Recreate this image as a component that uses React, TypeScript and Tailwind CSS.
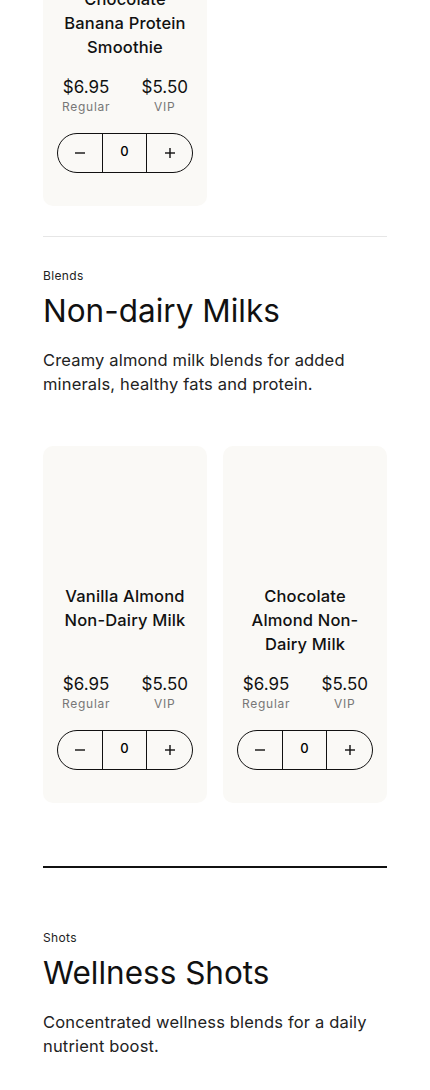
import React from "react";

interface Product {
  name: string;
  regular: string;
  vip: string;
}

const smoothies: Product[] = [
  { name: "Chocolate Banana Protein Smoothie", regular: "$6.95", vip: "$5.50" },
];

const milks: Product[] = [
  { name: "Vanilla Almond Non-Dairy Milk", regular: "$6.95", vip: "$5.50" },
  { name: "Chocolate Almond Non-Dairy Milk", regular: "$6.95", vip: "$5.50" },
];

const Stepper = () => (
  <div className="mt-[18px] flex h-10 w-full items-stretch rounded-full border border-[#111]">
    <button className="flex w-[44px] items-center justify-center">
      <svg width="12" height="12" viewBox="0 0 12 12">
        <line x1="1" y1="6" x2="11" y2="6" stroke="#111" strokeWidth="1.4" />
      </svg>
    </button>
    <div className="flex flex-1 items-center justify-center border-x border-[#111] pb-[3px] text-[13px] font-medium">
      0
    </div>
    <button className="flex w-[45px] items-center justify-center">
      <svg width="12" height="12" viewBox="0 0 12 12">
        <line x1="1" y1="6" x2="11" y2="6" stroke="#111" strokeWidth="1.4" />
        <line x1="6" y1="1" x2="6" y2="11" stroke="#111" strokeWidth="1.4" />
      </svg>
    </button>
  </div>
);

const Card = ({ product }: { product: Product }) => (
  <div className="flex flex-col rounded-[10px] bg-[#faf9f6] px-[14px] pt-[14px] pb-[33px]">
    <div className="h-[124px]" />
    <h3 className="text-center text-[16.5px] leading-6 font-medium tracking-[0.01em] text-[#111]">
      {product.name}
    </h3>
    <div className="mt-auto flex justify-between px-[5px] pt-4">
      <div className="text-center">
        <p className="text-[17px] leading-6 text-[#111]">{product.regular}</p>
        <p className="text-[12px] leading-4 tracking-[0.06em] text-[#777]">Regular</p>
      </div>
      <div className="text-center">
        <p className="text-[17px] leading-6 text-[#111]">{product.vip}</p>
        <p className="text-[12px] leading-4 tracking-[0.06em] text-[#777]">VIP</p>
      </div>
    </div>
    <Stepper />
  </div>
);

const SectionHead = ({ eyebrow, title, text }: { eyebrow: string; title: string; text: string }) => (
  <div>
    <p className="text-[12px] leading-4 tracking-[0.03em] text-[#222]">{eyebrow}</p>
    <h2 className="mt-[7px] text-[31.5px] leading-10 text-[#111]">{title}</h2>
    <p className="mt-[17px] text-[16.5px] leading-6 tracking-[0.01em] text-[#222]">{text}</p>
  </div>
);

export default function App() {
  return (
    <div
      className="min-h-[1090px] overflow-hidden bg-white px-[43px]"
      style={{ fontFamily: "Inter, 'Open Sans', sans-serif" }}
    >
      <div className="-mt-[151px] grid grid-cols-2 gap-4">
        {smoothies.map((p) => (
          <Card key={p.name} product={p} />
        ))}
      </div>

      <div className="mt-[30px] h-px bg-[#e6e6e6]" />

      <div className="pt-[31px]">
        <SectionHead
          eyebrow="Blends"
          title="Non-dairy Milks"
          text="Creamy almond milk blends for added minerals, healthy fats and protein."
        />
        <div className="mt-[50px] grid grid-cols-2 gap-4">
          {milks.map((p) => (
            <Card key={p.name} product={p} />
          ))}
        </div>
      </div>

      <div className="mt-[63px] h-[2px] bg-[#111]" />

      <div className="pt-[62px]">
        <SectionHead
          eyebrow="Shots"
          title="Wellness Shots"
          text="Concentrated wellness blends for a daily nutrient boost."
        />
      </div>
    </div>
  );
}
